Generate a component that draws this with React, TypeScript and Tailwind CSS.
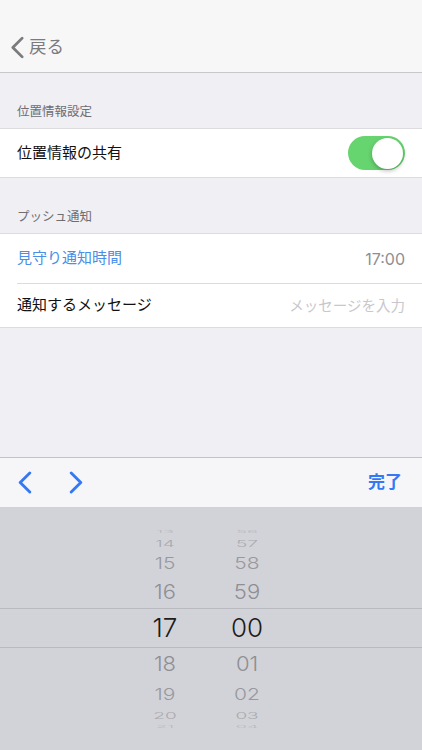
import React from "react";

const FONT = "font-['Inter','Noto_Sans_CJK_JP',sans-serif]";

type PickItem = { h: number; size: number; scale: number; color: string };

// wheel rows, top to bottom; the middle one is the selected value
const ROWS: PickItem[] = [
  { h: 8, size: 18, scale: 0.18, color: "#b9babf" },
  { h: 14, size: 19, scale: 0.5, color: "#a9aaaf" },
  { h: 26, size: 21, scale: 0.78, color: "#98999e" },
  { h: 32, size: 22, scale: 0.93, color: "#8e8f94" },
  { h: 39, size: 26, scale: 1, color: "#1c1c1e" },
  { h: 34, size: 22, scale: 0.93, color: "#8e8f94" },
  { h: 26, size: 21, scale: 0.78, color: "#98999e" },
  { h: 16, size: 19, scale: 0.5, color: "#a9aaaf" },
  { h: 8, size: 18, scale: 0.18, color: "#b9babf" },
];

const HOURS = ["13", "14", "15", "16", "17", "18", "19", "20", "21"];
const MINUTES = ["56", "57", "58", "59", "00", "01", "02", "03", "04"];

const Wheel = ({ values }: { values: string[] }) => (
  <div className="flex w-[60px] flex-col font-light">
    {values.map((v, i) => (
      <div
        key={v}
        className="flex items-center justify-center overflow-visible"
        style={{ height: ROWS[i].h }}
      >
        <span
          className="leading-none"
          style={{
            fontSize: ROWS[i].size,
            color: ROWS[i].color,
            transform: `scaleY(${ROWS[i].scale})`,
          }}
        >
          {v}
        </span>
      </div>
    ))}
  </div>
);

const Chevron = ({ dir, color, className }: { dir: "left" | "right"; color: string; className: string }) => (
  <svg viewBox="0 0 16 24" className={className} fill="none">
    <path
      d={dir === "left" ? "M13 2 L3 12 L13 22" : "M3 2 L13 12 L3 22"}
      stroke={color}
      strokeWidth="3"
      strokeLinecap="round"
      strokeLinejoin="round"
    />
  </svg>
);

export default function App() {
  return (
    <div className={`flex h-[750px] w-[422px] flex-col overflow-hidden bg-[#efeff4] ${FONT}`}>
      {/* nav bar */}
      <div className="flex h-[73px] shrink-0 items-end border-b border-[#c8c7cc] bg-[#f7f7f8] pb-[13px]">
        <div className="flex items-center gap-[4px] pl-[10px]">
          <Chevron dir="left" color="#7b7b7e" className="h-[23px] w-[15px]" />
          <span className="text-[17.5px] leading-[24px] text-[#7b7b7e]">戻る</span>
        </div>
      </div>

      {/* location section */}
      <div className="flex h-[55px] shrink-0 items-end px-[17px] pb-[8px]">
        <span className="text-[12.5px] leading-[16px] text-[#6d6d72]">位置情報設定</span>
      </div>
      <div className="flex h-[50px] shrink-0 items-center justify-between border-y border-[#dcdce0] bg-white pl-[17px] pr-[17px]">
        <span className="text-[15px] text-[#111]">位置情報の共有</span>
        <div className="flex h-[34px] w-[57px] items-center justify-end rounded-full bg-[#66d46f] pr-[2px]">
          <div className="h-[31px] w-[31px] rounded-full bg-white shadow-[0_2px_4px_rgba(0,0,0,0.25)]" />
        </div>
      </div>

      {/* push section */}
      <div className="flex h-[55px] shrink-0 items-end px-[17px] pb-[8px]">
        <span className="text-[12.5px] leading-[16px] text-[#6d6d72]">プッシュ通知</span>
      </div>
      <div className="shrink-0 border-y border-[#dcdce0] bg-white">
        <div className="flex h-[49px] items-center justify-between pr-[17px] pl-[17px]">
          <span className="text-[15px] text-[#4a8ee6]">見守り通知時間</span>
          <span className="text-[16px] text-[#8e8e93]">17:00</span>
        </div>
        <div className="ml-[17px] h-px bg-[#dcdce0]" />
        <div className="flex h-[43px] items-center justify-between pr-[17px] pl-[17px]">
          <span className="text-[15px] text-[#111]">通知するメッセージ</span>
          <span className="text-[14.5px] text-[#c7c7cd]">メッセージを入力</span>
        </div>
      </div>

      <div className="flex-1" />

      {/* keyboard toolbar */}
      <div className="flex h-[50px] shrink-0 items-center justify-between border-t border-[#c4c4c8] bg-[#f6f6f8] pl-[17px] pr-[20px]">
        <div className="flex items-center gap-[35px]">
          <Chevron dir="left" color="#3478f6" className="h-[23px] w-[16px]" />
          <Chevron dir="right" color="#3478f6" className="h-[23px] w-[16px]" />
        </div>
        <span className="text-[17px] font-semibold text-[#3478f6]">完了</span>
      </div>

      {/* picker */}
      <div className="relative h-[243px] shrink-0 bg-[#d2d3d8] pt-[21px]">
        <div className="absolute inset-x-0 top-[101px] h-[40px] border-y border-[#b9bac0]" />
        <div className="relative flex pl-[135px] gap-[22px]">
          <Wheel values={HOURS} />
          <Wheel values={MINUTES} />
        </div>
      </div>
    </div>
  );
}
